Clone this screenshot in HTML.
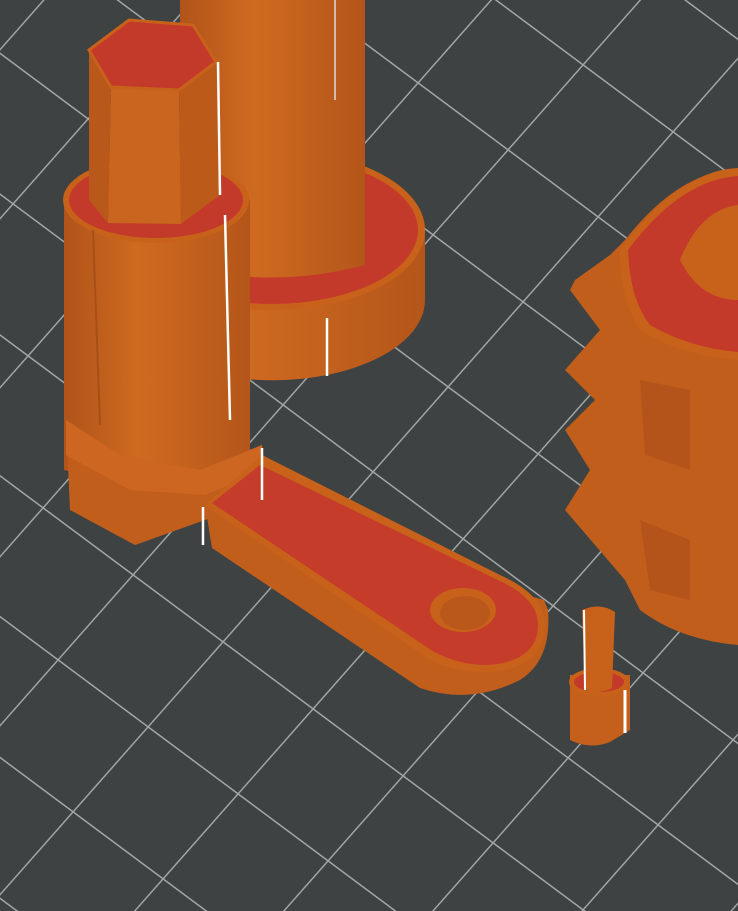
<!DOCTYPE html>
<html><head><meta charset="utf-8"><style>html,body{margin:0;padding:0;background:#3f4242}svg{display:block}</style></head>
<body>
<svg width="738" height="911" viewBox="0 0 738 911" xmlns="http://www.w3.org/2000/svg">
<defs>
<pattern id="g" patternUnits="userSpaceOnUse" width="1" height="1" patternTransform="matrix(90,67,75,-85,57,660)">
<path d="M0 0H1M0 0V1" stroke="#a3a7a7" stroke-width="0.026" fill="none"/>
</pattern>
<linearGradient id="cyl" x1="0" x2="1" y1="0" y2="0">
<stop offset="0" stop-color="#b0541a"/><stop offset="0.4" stop-color="#cf6a20"/><stop offset="1" stop-color="#b4561a"/>
</linearGradient>
</defs>
<rect width="738" height="911" fill="#3f4242"/>
<rect width="738" height="911" fill="url(#g)"/>

<!-- back cylinder base -->
<path d="M120 230 L120 300 A152 80 0 0 0 425 300 L425 230 Z" fill="url(#cyl)"/>
<ellipse cx="272" cy="230" rx="153" ry="80" fill="#c8621a"/>
<ellipse cx="272" cy="230" rx="146" ry="74" fill="#c33a2a"/>
<line x1="327" y1="318" x2="327" y2="376" stroke="#fff" stroke-width="2.5"/>
<!-- back tall cylinder -->
<path d="M180 0 L180 265 Q270 290 365 265 L365 0 Z" fill="url(#cyl)"/>
<line x1="335" y1="0" x2="335" y2="100" stroke="#ddd" stroke-width="1.5"/>

<!-- front cylinder -->
<path d="M64 200 L64 470 Q160 495 250 470 L250 200 Z" fill="url(#cyl)"/>
<ellipse cx="156" cy="200" rx="93" ry="43" fill="#c8621a"/>
<ellipse cx="156" cy="200" rx="87" ry="38" fill="#c33a2a"/>
<line x1="225" y1="215" x2="230" y2="420" stroke="#fff" stroke-width="2.5"/>
<line x1="93" y1="230" x2="100" y2="425" stroke="#a84f18" stroke-width="2"/>

<!-- hex prism -->
<polygon points="89,50 111,87 108,223 89,200" fill="#b8581a"/>
<polygon points="111,87 179,90 181,224 108,223" fill="#c9651e"/>
<polygon points="179,90 216,62 220,195 181,224" fill="#bc5a1a"/>
<polygon points="89,50 129,20 193,25 216,62 179,90 111,87" fill="#c33a2a" stroke="#c8621a" stroke-width="3"/>
<line x1="218" y1="62" x2="220" y2="195" stroke="#fff" stroke-width="2.5"/>

<!-- base plate -->
<polygon points="66,420 70,510 135,545 205,520 265,495 262,445 200,470 120,455" fill="#c25e1c"/>
<polygon points="66,420 120,455 200,470 262,445 265,470 205,495 130,490 66,455" fill="#cd6620"/>

<!-- arm -->
<path d="M205 505 L212 548 L420 688 Q470 705 520 680 Q552 660 548 610 L544 600 Z" fill="#c25e1c"/>
<path d="M205 505 L262 455 L500 575 Q545 595 545 625 Q545 660 505 670 Q470 678 430 660 Z" fill="#c8621a"/>
<path d="M212 503 L260 465 L498 580 Q538 598 538 625 Q538 655 503 663 Q470 670 434 652 Z" fill="#c63c2b"/>
<ellipse cx="463" cy="610" rx="33" ry="22" fill="#c8621a"/>
<ellipse cx="465" cy="613" rx="25" ry="17" fill="#b9581a"/>
<line x1="203" y1="507" x2="203" y2="545" stroke="#fff" stroke-width="2.5"/>
<line x1="262" y1="448" x2="262" y2="500" stroke="#fff" stroke-width="2.5"/>

<!-- small pin -->
<path d="M570 675 L570 740 Q590 750 610 742 L630 730 L630 675 Z" fill="#c4601c"/>
<ellipse cx="599" cy="682" rx="30" ry="14" fill="#c8621a"/>
<ellipse cx="599" cy="682" rx="25" ry="10" fill="#c33a2a"/>
<path d="M582 610 L585 690 Q598 695 612 688 L615 612 Q600 602 582 610 Z" fill="#c8621a"/>
<line x1="584" y1="610" x2="585" y2="690" stroke="#fff" stroke-width="2"/>
<line x1="625" y1="690" x2="625" y2="733" stroke="#fff" stroke-width="3"/>

<!-- gear right -->
<path d="M575 280 L610 255 L625 240 Q680 170 738 170 L738 645 Q680 640 640 610 L625 580 L565 510 L590 470 L565 430 L595 400 L565 370 L600 330 L570 290 Z" fill="#c25e1c"/>
<path d="M620 250 Q680 170 738 168 L738 360 Q680 355 640 330 Q620 300 620 250 Z" fill="#c8621a"/>
<path d="M628 250 Q680 180 738 176 L738 352 Q690 348 650 325 Q630 300 628 250 Z" fill="#c33a2a"/>
<path d="M680 260 Q700 210 738 205 L738 300 Q700 300 680 260 Z" fill="#c8621a"/>
<polygon points="640 380 690 390 690 470 645 455" fill="#b4541a"/>
<polygon points="640 520 690 540 690 600 650 590" fill="#b4541a"/>
</svg>
</body></html>
